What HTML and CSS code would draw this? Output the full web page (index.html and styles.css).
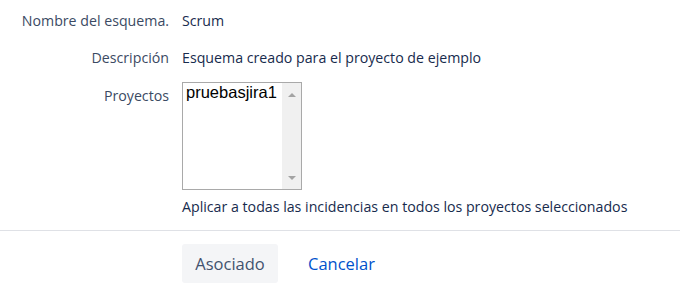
FILE: index.html
```html
<!DOCTYPE html>
<html lang="es">
<head>
<meta charset="utf-8">
<title>Asociar esquema</title>
<link rel="stylesheet" href="styles.css">
</head>
<body>
<form class="form">
  <div class="row row-name">
    <div class="label">Nombre del esquema.</div>
    <div class="value">Scrum</div>
  </div>
  <div class="row row-desc">
    <div class="label">Descripción</div>
    <div class="value">Esquema creado para el proyecto de ejemplo</div>
  </div>
  <div class="row row-proj">
    <div class="label label-proj">Proyectos</div>
    <div class="field">
      <div class="listbox">
        <div class="options">
          <div class="option">pruebasjira1</div>
        </div>
        <div class="scrollbar">
          <span class="arrow arrow-up"></span>
          <span class="arrow arrow-down"></span>
        </div>
      </div>
      <div class="hint">Aplicar a todas las incidencias en todos los proyectos seleccionados</div>
    </div>
  </div>
  <div class="footer">
    <div class="spacer"></div>
    <div class="actions">
      <button type="button" class="btn">Asociado</button>
      <a class="link" href="#">Cancelar</a>
    </div>
  </div>
</form>
</body>
</html>
```

FILE: styles.css
```css
html, body {
  margin: 0;
  padding: 0;
  background: #ffffff;
}

body {
  font-family: "Open Sans", "Noto Sans", sans-serif;
  font-size: 14.2px;
  color: #172b4d;
}

.form {
  padding-top: 11px;
}

.row {
  display: grid;
  grid-template-columns: 169px 1fr;
  column-gap: 13px;
  line-height: 20px;
}

.row-desc {
  margin-top: 17px;
}

.row-proj {
  margin-top: 14px;
}

.label {
  text-align: right;
  color: #3b4a63;
  white-space: nowrap;
}

.label-proj {
  padding-top: 4px;
}

.value {
  color: #172b4d;
  white-space: nowrap;
}

.listbox {
  width: 118px;
  height: 106px;
  border: 1px solid #a9a9a9;
  display: flex;
  background: #fff;
}

.options {
  flex: 1;
  padding-left: 3px;
  padding-top: 0;
}

.option {
  font-family: "Liberation Sans", Arial, sans-serif;
  font-size: 16.5px;
  line-height: 19px;
  color: #000;
  white-space: nowrap;
}

.scrollbar {
  width: 19px;
  background: #f0f0f0;
  display: flex;
  flex-direction: column;
  justify-content: space-between;
  align-items: center;
  padding: 10px 0 9px;
}

.arrow {
  width: 0;
  height: 0;
  border-left: 4px solid transparent;
  border-right: 4px solid transparent;
}

.arrow-up {
  border-bottom: 4px solid #a3a3a3;
}

.arrow-down {
  border-top: 4px solid #a3a3a3;
}

.hint {
  margin-top: 7px;
  color: #172b4d;
  white-space: nowrap;
}

.footer {
  margin-top: 13px;
  border-top: 1px solid #dfe1e6;
  padding-top: 13px;
  display: grid;
  grid-template-columns: 169px 1fr;
  column-gap: 13px;
}

.actions {
  display: flex;
  align-items: center;
  gap: 30px;
}

.btn {
  font-family: inherit;
  font-size: 16.5px;
  color: #42526e;
  background: #f4f5f7;
  border: none;
  border-radius: 3px;
  height: 39px;
  width: 96px;
  padding: 0;
  cursor: pointer;
}

.link {
  font-size: 16.5px;
  color: #0052cc;
  text-decoration: none;
}
```
